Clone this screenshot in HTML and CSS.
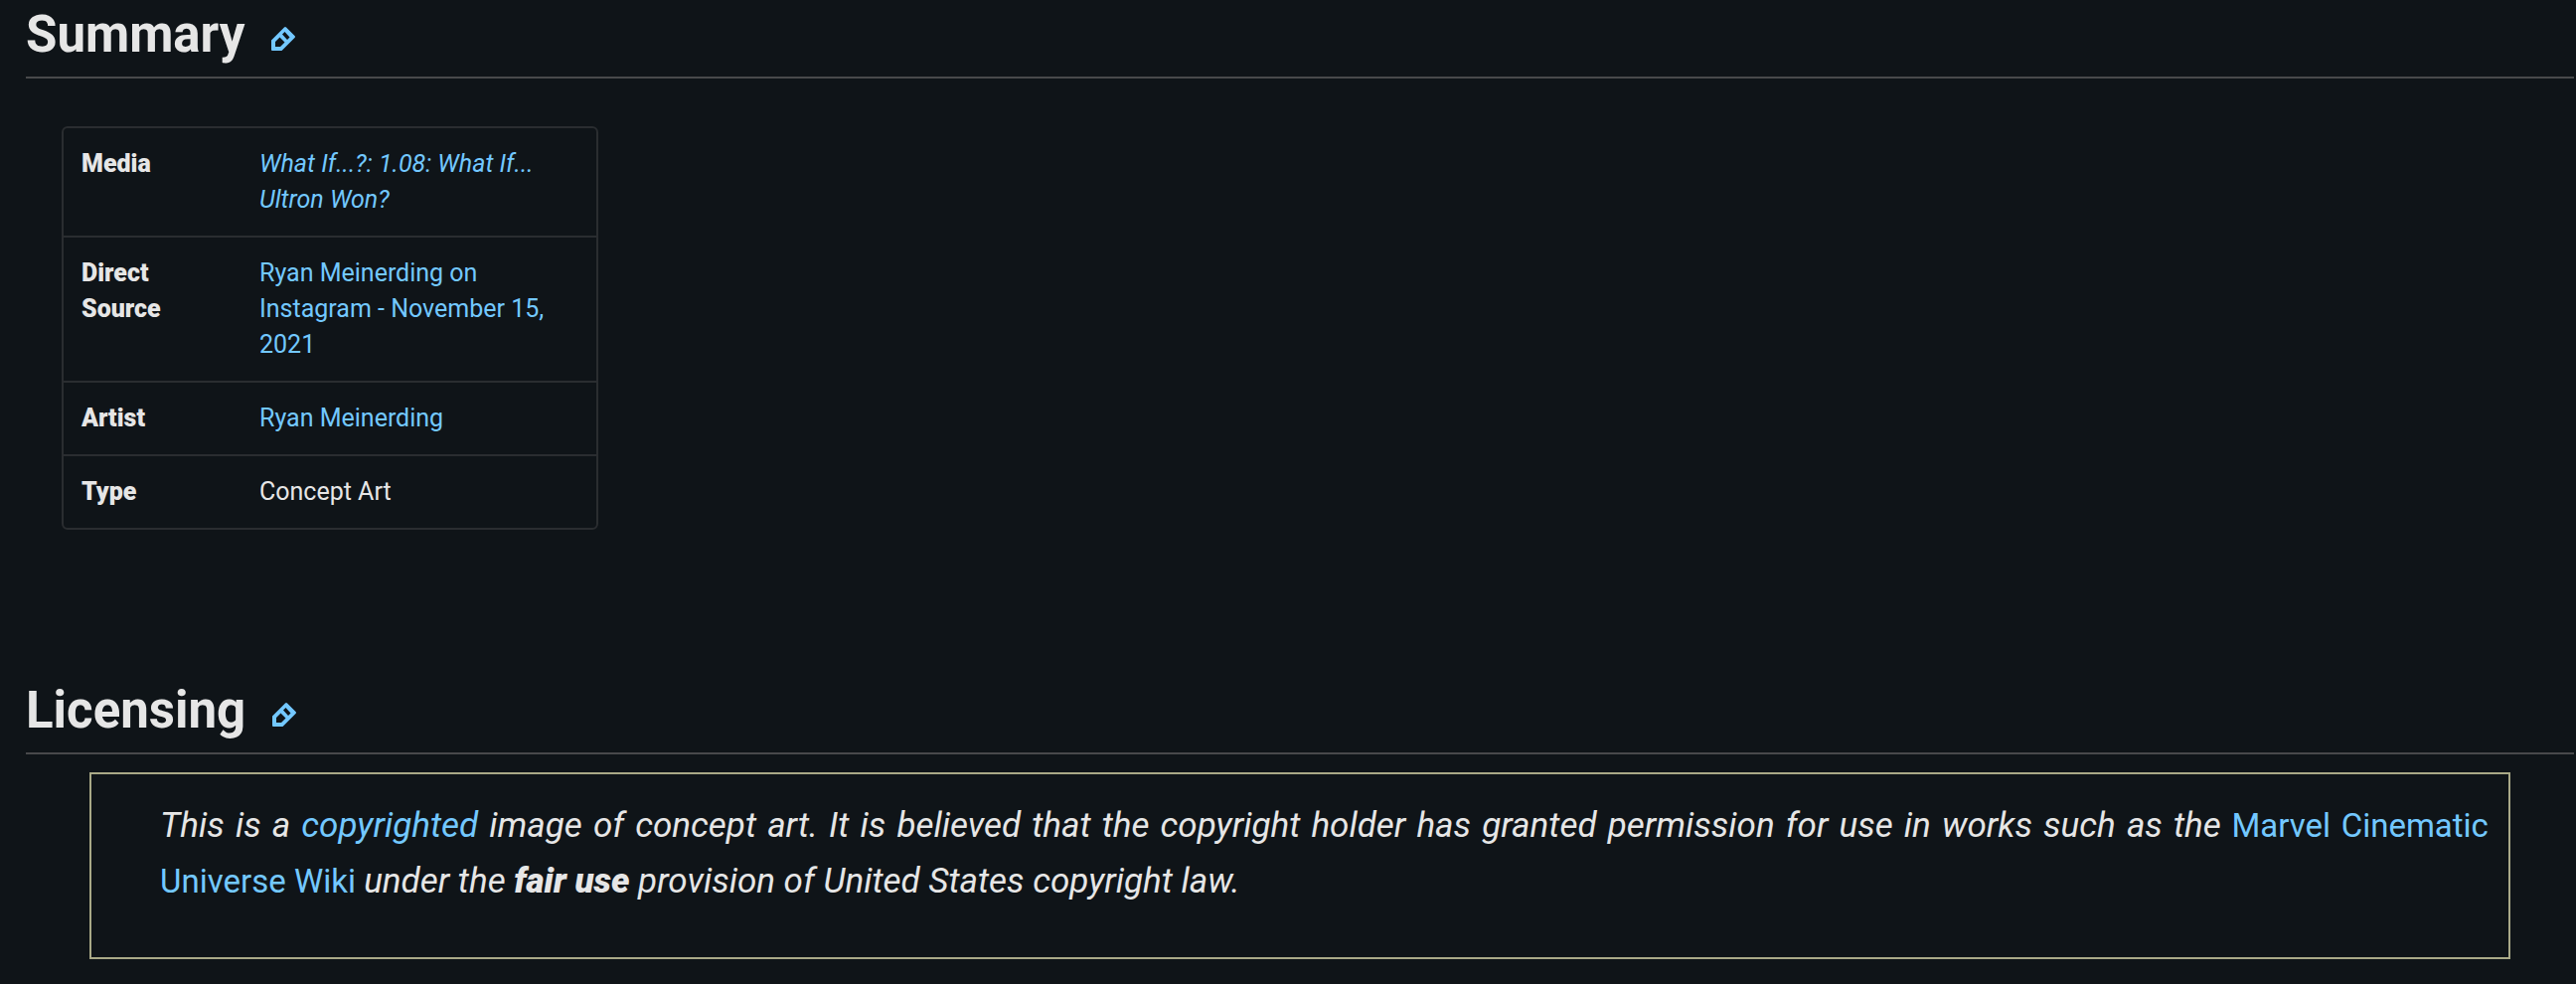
FILE: index.html
```html
<!DOCTYPE html>
<html lang="en">
<head>
    <meta charset="UTF-8">
    <meta name="viewport" content="width=device-width, initial-scale=1.0">
    <title>File Summary</title>
    <link rel="stylesheet" href="styles.css">
</head>
<body>
    <!-- Summary -->
    <section class="summary">
        <h2>
            Summary
            <a class="edit" href="#edit-summary" aria-label="Edit section: Summary">
                <svg viewBox="0 0 24 24" width="24" height="24"><path fill-rule="evenodd" d="M0 23V13.500L13 .6q1-1 2 0L23.500 9q1 1 0 2L11 23.500Q10.500 24 10 24H1Q0 24 0 23ZM4 20V15L8.500 10.500 13.500 15.500 9 20ZM11 7.500 13.500 5 18.500 10.500 16 13Z" /></svg>
            </a>
        </h2>
        <table class="infobox">
            <tr>
                <th scope="row">Media</th>
                <td><i><a href="#what-if">What If...?: 1.08: What If... Ultron Won?</a></i></td>
            </tr>
            <tr>
                <th scope="row">Direct Source</th>
                <td><a href="#source">Ryan Meinerding on Instagram - November 15, 2021</a></td>
            </tr>
            <tr>
                <th scope="row">Artist</th>
                <td><a href="#artist">Ryan Meinerding</a></td>
            </tr>
            <tr>
                <th scope="row">Type</th>
                <td>Concept Art</td>
            </tr>
        </table>
    </section>

    <!-- Licensing -->
    <section class="licensing">
        <h2>
            Licensing
            <a class="edit" href="#edit-licensing" aria-label="Edit section: Licensing">
                <svg viewBox="0 0 24 24" width="24" height="24"><path fill-rule="evenodd" d="M0 23V13.500L13 .6q1-1 2 0L23.500 9q1 1 0 2L11 23.500Q10.500 24 10 24H1Q0 24 0 23ZM4 20V15L8.500 10.500 13.500 15.500 9 20ZM11 7.500 13.500 5 18.500 10.500 16 13Z" /></svg>
            </a>
        </h2>
        <div class="notice">
            <p><i>This is a <a href="#copyright">copyrighted</a> image of concept art. It is believed that the copyright holder has granted permission for use in works such as the</i> <a href="#wiki">Marvel Cinematic Universe Wiki</a> <i>under the <b>fair use</b> provision of United States copyright law.</i></p>
        </div>
    </section>
</body>
</html>
```
FILE: styles.css
```css
body {
    font-family: Roboto, Arial, sans-serif;
    margin: 0;
    padding: 0 2px 0 26px;
    background: #0f1418;
    color: #e6e6e6;
    font-size: 25px;
    line-height: 36px;
}
a {
    color: #73c8ff;
    text-decoration: none;
}
a:hover {
    text-decoration: underline;
}
h2 {
    display: flex;
    align-items: center;
    gap: 27px;
    margin: 0;
    padding: 6px 0 13px;
    border-bottom: 2px solid #48494b;
    font-size: 51px;
    font-weight: 700;
    line-height: 58px;
}
.edit {
    display: flex;
    padding-top: 8px;
}
.edit svg {
    fill: #73c8ff;
}
.infobox {
    width: 540px;
    margin: 48px 0 0 36px;
    border: 2px solid #2a2d30;
    border-radius: 6px;
    border-spacing: 0;
    table-layout: fixed;
}
.infobox th,
.infobox td {
    padding: 18px;
    text-align: left;
    vertical-align: top;
}
.infobox th {
    width: 143px;
    font-weight: 900;
}
.infobox tr + tr th,
.infobox tr + tr td {
    border-top: 2px solid #2a2d30;
}
.licensing {
    margin-top: 147px;
}
.notice {
    width: 95%;
    box-sizing: border-box;
    margin: 18px auto 0;
    padding: 24px 20px 48px 69px;
    border: 2px solid #a9a987;
    font-size: 33px;
    line-height: 56px;
    text-align: justify;
}
.notice i {
    font-size: 35px;
}
.notice b {
    font-weight: 900;
}
.notice p {
    margin: 0;
}
```
